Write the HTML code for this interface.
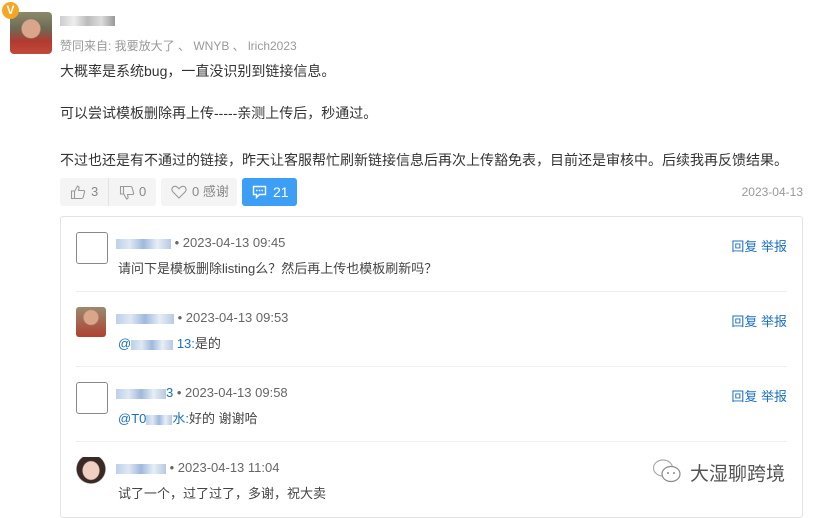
<!DOCTYPE html>
<html><head><meta charset="utf-8"><style>
body{margin:0;width:816px;height:504px;overflow:hidden;background:#fff;font-family:"Liberation Sans","Noto Sans CJK SC",sans-serif;position:relative;color:#333}
.a{position:absolute}
.t{font-size:14px;color:#333;white-space:nowrap}
.blur{display:inline-block;height:10px;background:linear-gradient(90deg,#bcd0e8,#dfe8f3,#9fb9dc,#e6eef6,#b8c9e2);vertical-align:middle}
.btn{position:absolute;top:178px;height:28px;border-radius:3px;background:#f4f4f4;font-size:13px;color:#888;line-height:28px}
.ca{position:absolute;left:76px;width:30px;height:30px;border:1px solid #888;border-radius:3px}
.meta{position:absolute;left:116px;font-size:13px;color:#666;white-space:nowrap}
.ct{position:absolute;left:118px;font-size:13px;color:#444;white-space:nowrap}
.op{position:absolute;right:29px;font-size:13px;color:#1a6fc0}
.sep{position:absolute;left:76px;width:711px;height:1px;background:#eee}
</style></head><body>
<div class="a" style="left:10px;top:12px;width:42px;height:42px;border-radius:4px;background:radial-gradient(circle at 50% 40%,#d9a58b 0 9px,transparent 10px),linear-gradient(180deg,#8a8a6a 0%,#6d6a55 40%,#b23a30 70%,#c24a3a 100%)"></div>
<div class="a" style="left:2px;top:2px;width:17px;height:17px;border-radius:50%;background:#f5a623;color:#fff;font-size:12px;font-weight:bold;text-align:center;line-height:17px">V</div>
<div class="a" style="left:60px;top:16px;width:55px;height:10px;background:linear-gradient(90deg,#ccc,#eee,#bbb,#ddd,#999)"></div>
<div class="a" style="left:60px;top:37px;font-size:12px;color:#999;white-space:nowrap">赞同来自: 我要放大了 、 WNYB 、 lrich2023</div>
<div class="a t" style="left:60px;top:61px">大概率是系统bug，一直没识别到链接信息。</div>
<div class="a t" style="left:60px;top:103px">可以尝试模板删除再上传-----亲测上传后，秒通过。</div>
<div class="a t" style="left:60px;top:150px">不过也还是有不通过的链接，昨天让客服帮忙刷新链接信息后再次上传豁免表，目前还是审核中。后续我再反馈结果。</div>
<div class="btn" style="left:60px;width:96px">
<svg style="position:absolute;left:10px;top:6px" width="16" height="16" viewBox="0 0 16 16"><path d="M1.5 7h3v7.5h-3zM4.5 7.5l3-5.5c1 0 1.8.8 1.5 2L8.5 6.5h5c.8 0 1.3.7 1.1 1.4l-1.5 5.6c-.2.6-.7 1-1.3 1H4.5" fill="none" stroke="#999" stroke-width="1.1"/></svg>
<span style="position:absolute;left:31px">3</span><span style="position:absolute;left:48px;top:0;width:1px;height:28px;background:#e2e2e2"></span>
<svg style="position:absolute;left:59px;top:7px" width="16" height="16" viewBox="0 0 16 16"><path d="M1.5 1.5h3V9h-3zM4.5 8.5l3 5.5c1 0 1.8-.8 1.5-2L8.5 9.5h5c.8 0 1.3-.7 1.1-1.4l-1.5-5.6c-.2-.6-.7-1-1.3-1H4.5" fill="none" stroke="#999" stroke-width="1.1"/></svg>
<span style="position:absolute;left:79px">0</span></div>
<div class="btn" style="left:161px;width:76px"><svg style="position:absolute;left:10px;top:7px" width="16" height="14" viewBox="0 0 16 14"><path d="M8 13L2 7C0 5 1 1.3 4 1.3c1.8 0 3 1.3 4 2.5 1-1.2 2.2-2.5 4-2.5 3 0 4 3.7 2 5.7z" fill="none" stroke="#999" stroke-width="1.1"/></svg><span style="position:absolute;left:31px">0 感谢</span></div>
<div class="btn" style="left:242px;width:55px;background:#3d9ef5;color:#fff"><svg style="position:absolute;left:10px;top:7px" width="15" height="14" viewBox="0 0 15 14"><path d="M1.5 1.5h12v8h-6l-3 3v-3h-3z" fill="none" stroke="#fff" stroke-width="1.4"/><circle cx="4.8" cy="5.5" r=".9" fill="#fff"/><circle cx="7.5" cy="5.5" r=".9" fill="#fff"/><circle cx="10.2" cy="5.5" r=".9" fill="#fff"/></svg><span style="position:absolute;left:31px;font-size:14px">21</span></div>
<div class="a" style="right:13px;top:185px;font-size:12px;color:#999">2023-04-13</div>
<div class="a" style="left:60px;top:216px;width:741px;height:300px;border:1px solid #e3e3e3;border-radius:3px"></div>

<div class="ca" style="top:232px"></div>
<div class="meta" style="top:235px"><span class="blur" style="width:55px"></span> • 2023-04-13 09:45</div>
<div class="ct" style="top:258px">请问下是模板删除listing么？然后再上传也模板刷新吗？</div>
<div class="op" style="top:236px">回复 举报</div>
<div class="sep" style="top:291px"></div>

<div class="ca" style="top:307px;border:none;background:radial-gradient(circle at 50% 35%,#d9a58b 0 7px,transparent 8px),linear-gradient(180deg,#9a8a70,#b04030)"></div>
<div class="meta" style="top:310px"><span class="blur" style="width:58px"></span> • 2023-04-13 09:53</div>
<div class="ct" style="top:333px;color:#1a6fc0">@<span class="blur" style="width:42px"></span> 13:<span style="color:#444">是的</span></div>
<div class="op" style="top:311px">回复 举报</div>
<div class="sep" style="top:366px"></div>

<div class="ca" style="top:382px"></div>
<div class="meta" style="top:385px"><span class="blur" style="width:50px"></span><span style="color:#1a6fc0">3</span> • 2023-04-13 09:58</div>
<div class="ct" style="top:408px;color:#1a6fc0">@T0<span class="blur" style="width:26px"></span>水:<span style="color:#444">好的 谢谢哈</span></div>
<div class="op" style="top:386px">回复 举报</div>
<div class="sep" style="top:441px"></div>

<div class="ca" style="top:457px;border:none;background:radial-gradient(ellipse at 50% 45%,#f0d0c0 0 8px,transparent 9px),radial-gradient(circle at 50% 40%,#3a2a25 0 14px,transparent 15px),#fff"></div>
<div class="meta" style="top:460px"><span class="blur" style="width:50px"></span> • 2023-04-13 11:04</div>
<div class="ct" style="top:483px">试了一个，过了过了，多谢，祝大卖</div>
<svg class="a" style="left:652px;top:458px" width="30" height="26" viewBox="0 0 30 26"><ellipse cx="11" cy="10" rx="9.5" ry="8" fill="none" stroke="#aaa" stroke-width="1.2"/><ellipse cx="19" cy="16" rx="9" ry="7.5" fill="#fff" stroke="#888" stroke-width="1.2"/><circle cx="16" cy="15" r="1" fill="#888"/><circle cx="22" cy="15" r="1" fill="#888"/></svg>
<div class="a" style="left:690px;top:459px;font-size:19px;color:#555;white-space:nowrap">大湿聊跨境</div>
</body></html>
